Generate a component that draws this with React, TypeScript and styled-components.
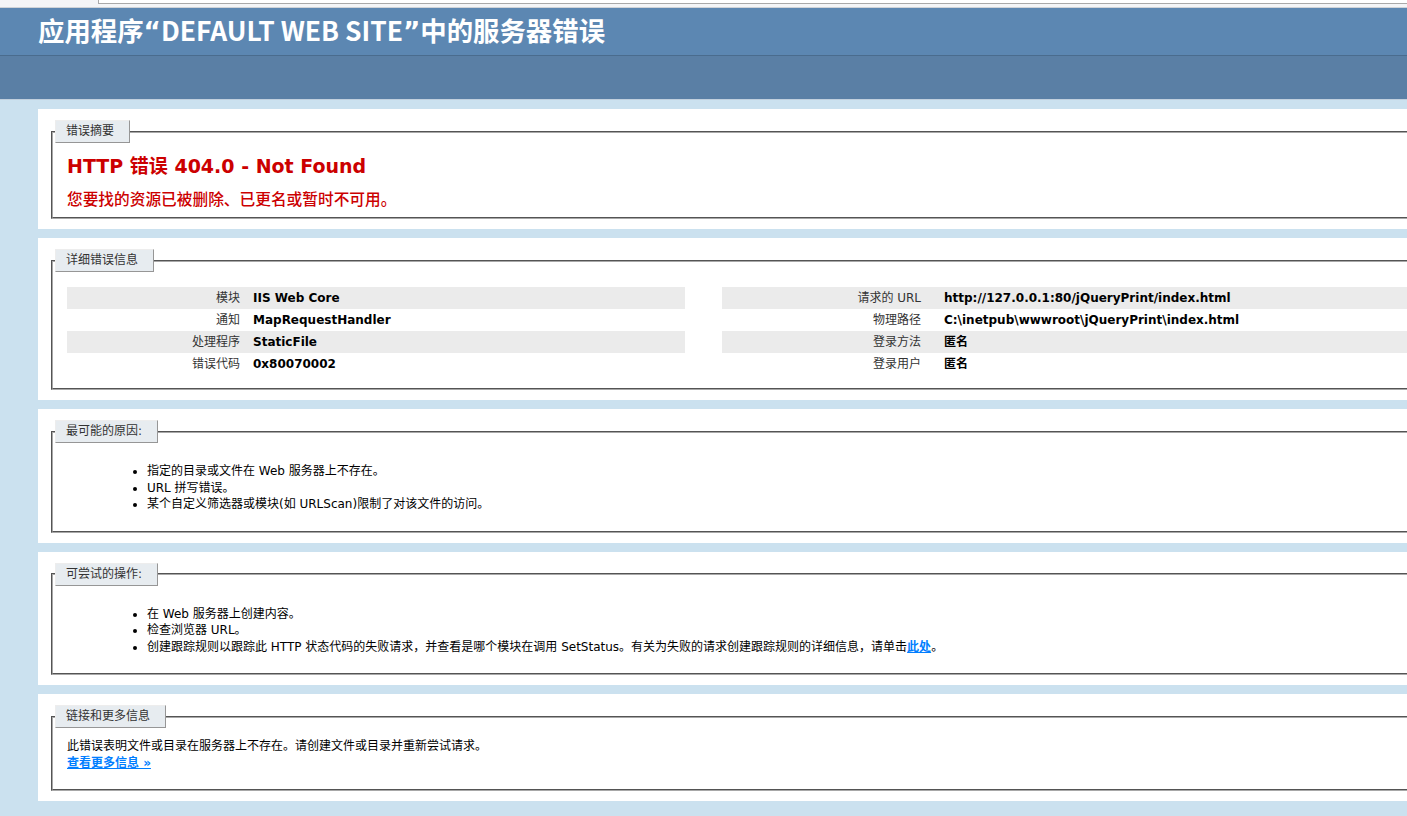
import React from "react";
import styled, { createGlobalStyle } from "styled-components";

const Global = createGlobalStyle`
  html, body { margin: 0; padding: 0; }
  body {
    background: #cbe1ef;
    font-family: "DejaVu Sans", "Noto Sans CJK SC", sans-serif;
    font-size: 12px;
    color: #000;
    overflow: hidden;
  }
`;

const Page = styled.div`
  min-width: 1407px;
  min-height: 816px;
`;

const Chrome = styled.div`
  height: 8px;
  box-sizing: border-box;
  display: flex;
  background: #f4f5f7;
  border-bottom: 1px solid #cfd3d8;
`;

const AddressBox = styled.div`
  margin-left: 98px;
  flex: 1;
  height: 3px;
  background: #fff;
  border-left: 1px solid #a9a9a9;
  border-bottom: 1px solid #a9a9a9;
`;

const Header = styled.header`
  height: 47px;
  padding-left: 38px;
  display: flex;
  align-items: center;
  background: #5c87b2;
`;

const Title = styled.h1`
  margin: 0;
  color: #fff;
  font-family: "Noto Sans CJK SC", sans-serif;
  font-weight: 700;
  font-size: 26.4px;
  line-height: 1;
`;

const Quote = styled.span`
  font-family: "DejaVu Sans", sans-serif;
  font-weight: 700;
`;

const ServerBar = styled.div`
  height: 43px;
  background: #5a7fa5;
  border-top: 1px solid #4a6c8e;
  border-bottom: 1px solid #c1cfdd;
`;

const Content = styled.main`
  display: flex;
  flex-direction: column;
  gap: 9px;
  padding: 9px 0 0 38px;
`;

const Panel = styled.section`
  width: 1600px;
  background: #fff;
  padding: 11px 0 10px 13px;
`;

const Box = styled.fieldset<{ $padBottom: number }>`
  margin: 0;
  padding: 0 15px ${(p) => p.$padBottom}px 14px;
  border: 2px groove #a8a8a8;
  min-width: 0;
`;

const Legend = styled.legend`
  margin-left: -12px;
  padding: 4px 15px 4px 10px;
  line-height: 13px;
  font-size: 12px;
  color: #333;
  background: #e7ecf0;
  border-top: 1px solid #ededed;
  border-left: 1px solid #ededed;
  border-right: 1px solid #969696;
  border-bottom: 1px solid #969696;
`;

const ErrorTitle = styled.h2`
  margin: 12px 0 0;
  font-size: 19px;
  line-height: 22px;
  font-weight: 700;
  color: #cc0000;
`;

const ErrorSub = styled.h3`
  margin: 11px 0 0;
  font-family: "Noto Sans CJK SC", sans-serif;
  font-size: 15.7px;
  line-height: 22px;
  font-weight: 500;
  color: #cc0000;
`;

const Details = styled.div`
  display: flex;
  gap: 37px;
  margin-top: 15px;
`;

const DetailTable = styled.table<{ $width: number }>`
  width: ${(p) => p.$width}px;
  border-collapse: collapse;
  border-spacing: 0;
  table-layout: fixed;
`;

const Row = styled.tr<{ $alt: boolean }>`
  height: 22px;
  background: ${(p) => (p.$alt ? "#ebebeb" : "transparent")};
`;

const Label = styled.th<{ $width: number; $gap: number }>`
  width: ${(p) => p.$width - p.$gap}px;
  padding: 0 ${(p) => p.$gap}px 0 0;
  text-align: right;
  font-weight: normal;
  color: #333;
  line-height: 22px;
  vertical-align: middle;
  white-space: nowrap;
`;

const Value = styled.td`
  padding: 0;
  font-weight: 700;
  color: #000;
  line-height: 22px;
  vertical-align: middle;
  white-space: nowrap;
`;

const BulletList = styled.ul`
  margin: 20px 0 8px 40px;
  padding-left: 40px;
  line-height: 16.5px;
  list-style: disc;
`;

const Item = styled.li`
  white-space: nowrap;
`;

const Link = styled.a`
  color: #007eff;
  font-weight: 700;
  text-decoration: underline;
`;

const Paragraph = styled.p`
  margin: 10px 0 10px;
  line-height: 16.5px;
`;

type Detail = [string, string];

const leftDetails: Detail[] = [
  ["模块", "IIS Web Core"],
  ["通知", "MapRequestHandler"],
  ["处理程序", "StaticFile"],
  ["错误代码", "0x80070002"],
];

const rightDetails: Detail[] = [
  ["请求的 URL", "http://127.0.0.1:80/jQueryPrint/index.html"],
  ["物理路径", "C:\\inetpub\\wwwroot\\jQueryPrint\\index.html"],
  ["登录方法", "匿名"],
  ["登录用户", "匿名"],
];

function DetailBlock({
  rows,
  width,
  labelWidth,
  gap,
}: {
  rows: Detail[];
  width: number;
  labelWidth: number;
  gap: number;
}) {
  return (
    <DetailTable $width={width}>
      <tbody>
        {rows.map(([k, v], i) => (
          <Row key={k} $alt={i % 2 === 0}>
            <Label $width={labelWidth} $gap={gap}>
              {k}
            </Label>
            <Value>{v}</Value>
          </Row>
        ))}
      </tbody>
    </DetailTable>
  );
}

export default function App() {
  return (
    <Page>
      <Global />
      <Chrome>
        <AddressBox />
      </Chrome>
      <Header>
        <Title>
          应用程序<Quote>“</Quote>DEFAULT WEB SITE<Quote>”</Quote>中的服务器错误
        </Title>
      </Header>
      <ServerBar />
      <Content>
        <Panel>
          <Box $padBottom={7}>
            <Legend>错误摘要</Legend>
            <ErrorTitle>HTTP 错误 404.0 - Not Found</ErrorTitle>
            <ErrorSub>您要找的资源已被删除、已更名或暂时不可用。</ErrorSub>
          </Box>
        </Panel>

        <Panel>
          <Box $padBottom={13}>
            <Legend>详细错误信息</Legend>
            <Details>
              <DetailBlock rows={leftDetails} width={618} labelWidth={186} gap={13} />
              <DetailBlock rows={rightDetails} width={740} labelWidth={222} gap={23} />
            </Details>
          </Box>
        </Panel>

        <Panel>
          <Box $padBottom={10}>
            <Legend>最可能的原因:</Legend>
            <BulletList>
              <Item>指定的目录或文件在 Web 服务器上不存在。</Item>
              <Item>URL 拼写错误。</Item>
              <Item>某个自定义筛选器或模块(如 URLScan)限制了对该文件的访问。</Item>
            </BulletList>
          </Box>
        </Panel>

        <Panel>
          <Box $padBottom={10}>
            <Legend>可尝试的操作:</Legend>
            <BulletList>
              <Item>在 Web 服务器上创建内容。</Item>
              <Item>检查浏览器 URL。</Item>
              <Item>
                创建跟踪规则以跟踪此 HTTP 状态代码的失败请求，并查看是哪个模块在调用 SetStatus。有关为失败的请求创建跟踪规则的详细信息，请单击
                <Link href="#">此处</Link>。
              </Item>
            </BulletList>
          </Box>
        </Panel>

        <Panel>
          <Box $padBottom={8}>
            <Legend>链接和更多信息</Legend>
            <Paragraph>
              此错误表明文件或目录在服务器上不存在。请创建文件或目录并重新尝试请求。
              <br />
              <Link href="#">查看更多信息 »</Link>
            </Paragraph>
          </Box>
        </Panel>
      </Content>
    </Page>
  );
}
